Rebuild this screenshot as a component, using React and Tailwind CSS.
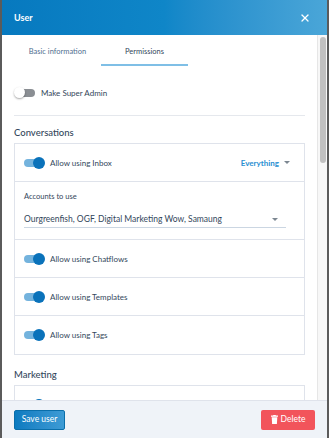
import React from 'react';
import { X } from 'lucide-react';

const Toggle = ({ on }) =>
  on ? (
    <div className="relative w-[21px] h-[12px] flex items-center shrink-0">
      <div className="w-[20px] h-[8px] rounded-full bg-[#74b3dd]" />
      <div className="absolute right-0 top-0 w-[12px] h-[12px] rounded-full bg-[#0a72ba]" />
    </div>
  ) : (
    <div className="relative w-[21px] h-[12px] flex items-center shrink-0">
      <div className="ml-[3px] w-[18px] h-[8px] rounded-full bg-[#8a8e93]" />
      <div className="absolute left-0 top-0 w-[11px] h-[11px] rounded-full bg-white shadow-[0_1px_2px_rgba(0,0,0,0.35)]" />
    </div>
  );

const Caret = () => (
  <svg width="6" height="3" viewBox="0 0 6 3" className="shrink-0">
    <path d="M0 0h6L3 3z" fill="#7c8791" />
  </svg>
);

const ToggleRow = ({ label, right }) => (
  <div className="h-[38px] flex items-center pl-[9px] pr-[14px]">
    <Toggle on />
    {label && <span className="ml-[5px] text-[8px] text-[#33475b]">{label}</span>}
    {right}
  </div>
);

const App = () => (
  <div className="w-[329px] h-[438px] flex flex-col bg-white border-x-2 border-[#5b5b5b] overflow-hidden font-['Lato',sans-serif] text-[#33475b]">
    <div className="h-[35px] shrink-0 flex items-center justify-between pl-[12px] pr-[16px] bg-gradient-to-r from-[#0779bf] via-[#0f86c8] to-[#4aa6d8]">
      <span className="text-white text-[9px] font-bold">User</span>
      <X size={12} color="white" strokeWidth={2.5} />
    </div>

    <div className="flex-1 flex overflow-hidden">
      <div className="flex-1 overflow-hidden px-[12px]">
        <div className="flex">
          <div className="w-[87px] h-[31px] pt-[4px] flex items-center justify-center text-[7.5px] text-[#516f90] border-b-2 border-transparent">
            Basic information
          </div>
          <div className="w-[87px] h-[31px] pt-[4px] flex items-center justify-center text-[7.5px] text-[#33475b] border-b-2 border-[#7fbfe6]">
            Permissions
          </div>
        </div>

        <div className="mt-[17px] h-[20px] flex items-center">
          <Toggle on={false} />
          <span className="ml-[6px] text-[8px]">Make Super Admin</span>
        </div>

        <div className="mt-[12px] border-t border-[#e5e8ed]" />

        <div className="mt-[9px] text-[9.5px] leading-[16px] font-medium">Conversations</div>

        <div className="mt-[2px] border border-[#dfe3eb] divide-y divide-[#dfe3eb]">
          <ToggleRow
            label="Allow using Inbox"
            right={
              <div className="ml-auto flex items-center gap-[5px]">
                <span className="text-[8px] font-bold text-[#2a8fd1]">Everything</span>
                <Caret />
              </div>
            }
          />
          <div className="h-[58px] px-[9px] pt-[9px]">
            <div className="text-[7.5px] leading-[12px] text-[#33475b]">Accounts to use</div>
            <div className="mt-[9px] mr-[9px] h-[16px] flex items-center justify-between border-b border-[#cbd6e2] pr-[8px]">
              <span className="text-[8.5px]">Ourgreenfish, OGF, Digital Marketing Wow, Samaung</span>
              <Caret />
            </div>
          </div>
          <ToggleRow label="Allow using Chatflows" />
          <ToggleRow label="Allow using Templates" />
          <ToggleRow label="Allow using Tags" />
        </div>

        <div className="mt-[12px] text-[9.5px] leading-[16px] font-medium">Marketing</div>

        <div className="mt-[2px] border border-[#dfe3eb]">
          <ToggleRow />
        </div>
      </div>

      <div className="w-[10px] shrink-0 bg-[#f7f7f7] border-l border-[#e6e6e6] pt-[2px] flex justify-center">
        <div className="w-[6px] h-[126px] rounded-full bg-[#c1c1c1]" />
      </div>
    </div>

    <div className="h-[38px] shrink-0 flex items-center justify-between pl-[12px] pr-[12px] bg-[#eff3f8] border-t border-[#dfe3eb]">
      <button className="w-[51px] h-[20px] rounded-[2px] bg-gradient-to-r from-[#0a7bc0] to-[#3d9bd5] border border-[#0a6eaa] text-white text-[8.5px]">
        Save user
      </button>
      <button className="w-[54px] h-[20px] rounded-[2px] bg-[#f2545b] text-white text-[8.5px] flex items-center justify-center gap-[3px]">
        <svg width="7" height="9" viewBox="0 0 7 9">
          <rect x="0" y="0.5" width="7" height="1.3" fill="white" />
          <rect x="2.2" y="0" width="2.6" height="1" fill="white" />
          <path d="M0.7 2.3h5.6l-0.4 6.7h-4.8z" fill="white" />
        </svg>
        Delete
      </button>
    </div>
  </div>
);

export default App;
